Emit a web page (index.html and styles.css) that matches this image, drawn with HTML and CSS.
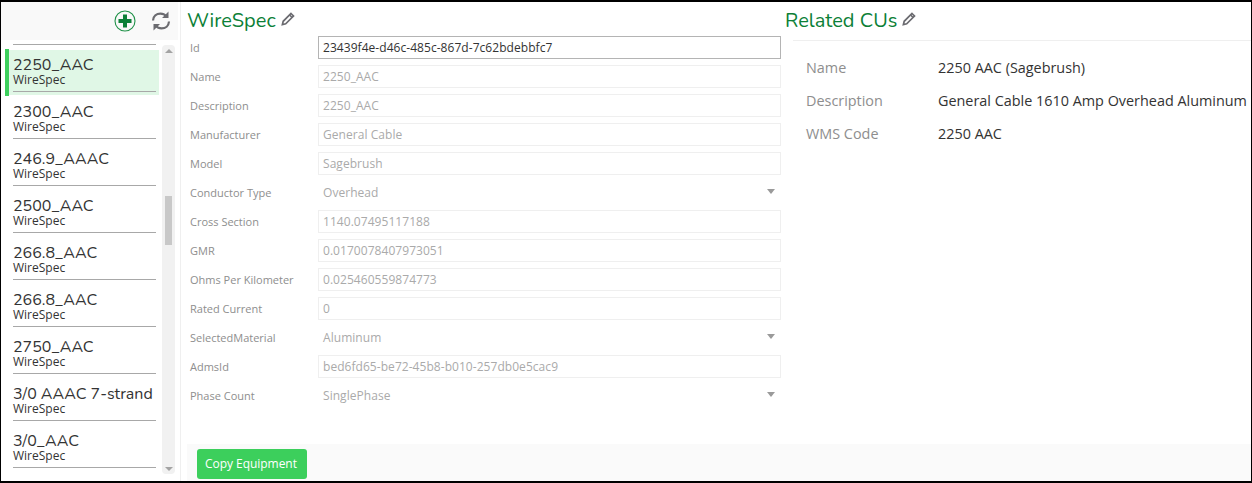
FILE: index.html
```html
<!DOCTYPE html>
<html lang="en">
<head>
<meta charset="utf-8">
<title>WireSpec</title>
<link rel="stylesheet" href="styles.css">
</head>
<body>
<div class="app">
  <aside class="sidebar">
    <div class="toolbar">
      <svg class="ic-add" viewBox="0 0 22 22" width="22" height="22"><circle cx="11" cy="11" r="10" fill="none" stroke="#1f9148" stroke-width="1.1"/><path d="M11 4.500v13M4.500 11h13" stroke="#0c7f37" stroke-width="4" fill="none"/></svg>
      <svg class="ic-sync" viewBox="0 0 20 22" width="20" height="22"><path d="M2 10.500C2.300 6.200 5.500 3.600 9.500 3.600c2.400 0 4.300.9 5.600 2.500M18 11.500c-.3 4.300-3.500 6.900-7.500 6.900-2.400 0-4.300-.9-5.600-2.500" fill="none" stroke="#6b6b70" stroke-width="2.200"/><path d="M17.500 1.500v6.500H11zM2.500 20.500V14H9z" fill="#6b6b70"/></svg>
    </div>
    <div class="list-wrap">
      <ul class="list">
        <li class="item active"><span class="item-name">2250_AAC</span><span class="item-type">WireSpec</span></li>
        <li class="item"><span class="item-name">2300_AAC</span><span class="item-type">WireSpec</span></li>
        <li class="item"><span class="item-name">246.9_AAAC</span><span class="item-type">WireSpec</span></li>
        <li class="item"><span class="item-name">2500_AAC</span><span class="item-type">WireSpec</span></li>
        <li class="item"><span class="item-name">266.8_AAC</span><span class="item-type">WireSpec</span></li>
        <li class="item"><span class="item-name">266.8_AAC</span><span class="item-type">WireSpec</span></li>
        <li class="item"><span class="item-name">2750_AAC</span><span class="item-type">WireSpec</span></li>
        <li class="item"><span class="item-name">3/0 AAAC 7-strand</span><span class="item-type">WireSpec</span></li>
        <li class="item"><span class="item-name">3/0_AAC</span><span class="item-type">WireSpec</span></li>
      </ul>
      <div class="scrollbar">
        <span class="arrow up"></span>
        <span class="thumb"></span>
        <span class="arrow down"></span>
      </div>
    </div>
  </aside>
  <main class="main">
    <div class="panels">
      <section class="spec">
        <h1 class="title">WireSpec
          <svg class="ic-pen" viewBox="0 0 14 14" width="14" height="14"><path d="M10 1.500l2.500 2.500-7.800 7.800-3.300.8.800-3.300z" fill="none" stroke="#6b6b70" stroke-width="1.700"/><path d="M8.600 3l2.400 2.400" stroke="#6b6b70" stroke-width="1.500"/></svg>
        </h1>
        <div class="form">
          <label class="lbl">Id</label><div class="field focus">23439f4e-d46c-485c-867d-7c62bdebbfc7</div>
          <label class="lbl">Name</label><div class="field">2250_AAC</div>
          <label class="lbl">Description</label><div class="field">2250_AAC</div>
          <label class="lbl">Manufacturer</label><div class="field">General Cable</div>
          <label class="lbl">Model</label><div class="field">Sagebrush</div>
          <label class="lbl">Conductor Type</label><div class="field select">Overhead</div>
          <label class="lbl">Cross Section</label><div class="field">1140.07495117188</div>
          <label class="lbl">GMR</label><div class="field">0.0170078407973051</div>
          <label class="lbl">Ohms Per Kilometer</label><div class="field">0.025460559874773</div>
          <label class="lbl">Rated Current</label><div class="field">0</div>
          <label class="lbl">SelectedMaterial</label><div class="field select">Aluminum</div>
          <label class="lbl">AdmsId</label><div class="field">bed6fd65-be72-45b8-b010-257db0e5cac9</div>
          <label class="lbl">Phase Count</label><div class="field select">SinglePhase</div>
        </div>
      </section>
      <section class="related">
        <h1 class="title">Related CUs
          <svg class="ic-pen" viewBox="0 0 14 14" width="14" height="14"><path d="M10 1.500l2.500 2.500-7.800 7.800-3.300.8.800-3.300z" fill="none" stroke="#6b6b70" stroke-width="1.700"/><path d="M8.600 3l2.400 2.400" stroke="#6b6b70" stroke-width="1.500"/></svg>
        </h1>
        <dl class="details">
          <dt>Name</dt><dd>2250 AAC (Sagebrush)</dd>
          <dt>Description</dt><dd>General Cable 1610 Amp Overhead Aluminum</dd>
          <dt>WMS Code</dt><dd>2250 AAC</dd>
        </dl>
      </section>
    </div>
    <footer class="footer"><button class="btn" type="button">Copy Equipment</button></footer>
  </main>
</div>
</body>
</html>
```
FILE: styles.css
```css
* { box-sizing: border-box; }
html, body { margin: 0; height: 100%; }
body { font-family: "Open Sans", "Liberation Sans", sans-serif; background: #fff; overflow: hidden; }
.app { display: flex; width: 1252px; height: 483px; border: 1px solid #000; border-top-width: 2px; border-bottom-width: 2px; overflow: hidden; }

.sidebar { width: 179px; flex: none; display: flex; flex-direction: column; }
.toolbar { height: 38px; flex: none; margin-right: 2px; background: #f9f9f9; display: flex; justify-content: flex-end; align-items: center; gap: 15px; padding: 0 7px 0 0; }
.ic-add, .ic-sync { display: block; margin-top: -1px; }
.list-wrap { flex: 1; min-height: 0; display: flex; align-items: stretch; padding: 5px 3px 7px 4px; position: relative; }
.list-wrap::before { content: ""; position: absolute; left: 12px; width: 143px; top: 4px; height: 1px; background: #a8a8a8; }
.list { list-style: none; margin: 4px 0 0; padding: 0; width: 155px; flex: none; }
.item { height: 47px; padding: 7px 0 0 8px; display: flex; flex-direction: column; position: relative; }
.item::after { content: ""; position: absolute; left: 8px; width: 143px; bottom: 4px; height: 1px; background: #a8a8a8; }
.item-name { font-family: "Nunito", "Open Sans", sans-serif; font-size: 16px; line-height: 19px; color: #333; white-space: nowrap; }
.item-type { font-size: 12px; line-height: 14px; margin-top: -2px; color: #333; }
.active { background:
  linear-gradient(#3ccf5c, #3ccf5c) 0 0 / 4px 47px no-repeat,
  linear-gradient(#e0f7e6, #e0f7e6) 4px 1px / 150px 45px no-repeat; }
.scrollbar { width: 13px; margin-left: 2px; background: #f1f1f1; border-radius: 4px; position: relative; }
.arrow { width: 0; height: 0; border-left: 4px solid transparent; border-right: 4px solid transparent; position: absolute; left: 3px; }
.up { top: 4px; border-bottom: 4px solid #a3a3a3; }
.down { bottom: 3px; border-top: 4px solid #a3a3a3; }
.thumb { position: absolute; left: 3px; top: 151px; width: 7px; height: 49px; background: #c8c8c8; }

.main { flex: 1; min-width: 0; display: flex; flex-direction: column; border-left: 1px solid #efefef; }
.panels { flex: 1; min-height: 0; display: flex; }
.spec { width: 601px; flex: none; padding-left: 6px; }
.related { flex: 1; min-width: 0; }
.title { margin: 0; height: 38px; font-family: "Nunito", "Open Sans", sans-serif; font-weight: 400; font-size: 20px; line-height: 24px; color: #0c7f37; display: flex; align-items: center; gap: 5px; white-space: nowrap; }
.ic-pen { margin-top: -4px; }
.form { display: grid; grid-template-columns: 128px 463px; grid-auto-rows: 23px; row-gap: 6px; padding: 0 0 0 3px; margin-top: -4px; }
.lbl { font-size: 11px; line-height: 23px; color: #8e8e8e; white-space: nowrap; }
.field { border: 1px solid #efefef; font-size: 12px; letter-spacing: .05px; line-height: 21px; padding: 0 4px; color: #aaa; position: relative; white-space: nowrap; }
.focus { border-color: #b4b4b4; color: #333; }
.select { border: 0; padding: 1px 5px; }
.select::after { content: ""; position: absolute; right: 6px; top: 8px; width: 0; height: 0; border-left: 4px solid transparent; border-right: 4px solid transparent; border-top: 5px solid #9a9a9a; }

.related .title { margin-left: 3px; }
.details { margin: 0 0 0 11px; padding: 10px 0 0 13px; border-top: 1px solid #efefef; display: grid; grid-template-columns: 132px 1fr; grid-auto-rows: 33px; font-size: 14.4px; line-height: 33px; white-space: nowrap; }
.details dt { color: #8e8e8e; }
.details dd { margin: 0; color: #333; }

.footer { height: 37px; flex: none; margin-left: 6px; background: #fafafa; padding: 5px 0 0 10px; }
.btn { display: block; width: 110px; height: 30px; background: #3ccf5c; color: #fff; border: 0; border-radius: 3px; font-family: "Open Sans", sans-serif; font-size: 12px; letter-spacing: -.05px; padding: 0 2px 2px 0; }
```
